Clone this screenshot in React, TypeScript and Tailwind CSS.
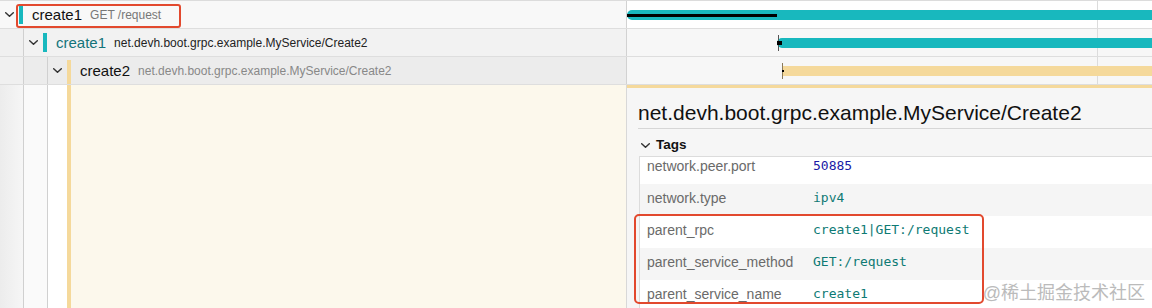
import React from 'react';

const sans = "font-['Liberation_Sans','Noto_Sans_CJK_SC',sans-serif]";
const mono = "font-['DejaVu_Sans_Mono','Liberation_Mono',monospace]";

function Chevron({ className = '' }: { className?: string }) {
  return (
    <svg width="9" height="5" viewBox="0 0 9 5" className={className}>
      <path d="M0.7 0.7l3.8 3.6 3.8-3.6" fill="none" stroke="#333" strokeWidth="1.4" strokeLinecap="round" />
    </svg>
  );
}

type Span = {
  level: number;
  bar: string;
  name: string;
  nameColor: string;
  service: string;
  serviceColor: string;
  leftBg: string;
  rightBg: string;
  tall?: boolean;
};

const spans: Span[] = [
  { level: 0, bar: 'bg-[#18b8be]', name: 'create1', nameColor: 'text-[#111]', service: 'GET /request', serviceColor: 'text-[#777]', leftBg: 'bg-[#f8f8f8]', rightBg: 'bg-white' },
  { level: 1, bar: 'bg-[#18b8be]', name: 'create1', nameColor: 'text-[#14747a]', service: 'net.devh.boot.grpc.example.MyService/Create2', serviceColor: 'text-[#222]', leftBg: 'bg-[#f2f2f2]', rightBg: 'bg-[#f7f7f7]' },
  { level: 2, bar: 'bg-[#f5d99b]', name: 'create2', nameColor: 'text-[#111]', service: 'net.devh.boot.grpc.example.MyService/Create2', serviceColor: 'text-[#888]', leftBg: 'bg-[#ececec]', rightBg: 'bg-[#f7f7f7]', tall: true },
];

const tags = [
  { key: 'network.peer.port', value: '50885', color: 'text-[#1a1aa6]' },
  { key: 'network.type', value: 'ipv4', color: 'text-[#0e7a74]' },
  { key: 'parent_rpc', value: 'create1|GET:/request', color: 'text-[#0e7a74]' },
  { key: 'parent_service_method', value: 'GET:/request', color: 'text-[#0e7a74]' },
  { key: 'parent_service_name', value: 'create1', color: 'text-[#0e7a74]' },
];

function SpanRow({ s, index }: { s: Span; index: number }) {
  return (
    <div className="flex h-[28px] border-b border-[#dedede]">
      <div className={`relative flex h-full w-[627px] shrink-0 items-center border-r border-[#d2d2d2] ${s.leftBg}`}>
        {Array.from({ length: s.level }).map((_, i) => (
          <div key={i} className={`h-full w-[24px] shrink-0 border-r border-[#d0d0d0] ${i === 0 ? 'bg-[#f0f0f0]' : ''}`} />
        ))}
        <div className="flex w-[19px] shrink-0 justify-center">
          <Chevron />
        </div>
        {s.tall ? (
          <div className={`h-[24px] w-[4px] shrink-0 self-end ${s.bar}`} />
        ) : (
          <div className={`h-[19px] w-[4px] shrink-0 ${s.bar}`} />
        )}
        <span className={`ml-[9px] text-[15px] leading-none ${s.nameColor}`}>{s.name}</span>
        <span className={`ml-[8px] text-[12px] leading-none ${s.serviceColor}`}>{s.service}</span>
        {index === 0 && (
          <div className="absolute left-[16px] top-[3px] h-[24px] w-[165px] rounded-[3px] border-2 border-[#e2492e]" />
        )}
      </div>
      <div className={`relative h-full flex-1 overflow-hidden ${s.rightBg}`}>
        <div className="absolute left-[470px] top-0 h-full w-px bg-[#dcdcdc]" />
        {index === 0 && (
          <>
            <div className="absolute left-0 right-0 top-[9px] h-[10px] rounded-l-full bg-[#18b8be]" />
            <div className="absolute left-0 top-[13px] h-[3px] w-[150px] bg-black" />
          </>
        )}
        {index === 1 && (
          <>
            <div className="absolute left-[150px] right-0 top-[9px] h-[10px] rounded-l-full bg-[#18b8be]" />
            <div className="absolute left-[151px] top-[6px] h-[16px] w-px bg-[#555]" />
            <div className="absolute left-[150px] top-[12px] h-[4px] w-[5px] bg-black" />
          </>
        )}
        {index === 2 && (
          <>
            <div className="absolute left-[156px] right-0 top-[9px] h-[10px] bg-[#f5d99b]" />
            <div className="absolute left-[155px] top-[6px] h-[16px] w-px bg-[#8a7a5a]" />
            <div className="absolute left-[155px] top-[13px] h-[2px] w-[2px] bg-black" />
          </>
        )}
      </div>
    </div>
  );
}

export default function App() {
  return (
    <div className={`relative h-[308px] w-[1152px] overflow-hidden bg-white ${sans}`}>
      <div className="border-t border-[#dcdcdc]">
        {spans.map((s, i) => (
          <SpanRow key={i} s={s} index={i} />
        ))}
      </div>
      <div className="flex h-[223px]">
        <div className="flex h-full w-[627px] shrink-0 border-r border-[#d8d8d8]">
          <div className="h-full w-[24px] shrink-0 border-r border-[#d0d0d0] bg-gradient-to-r from-[#ececec] to-[#f6f6f6]" />
          <div className="h-full w-[24px] shrink-0 border-r border-[#d0d0d0] bg-[#fafafa]" />
          <div className="h-full w-[19px] shrink-0 bg-white" />
          <div className="h-full w-[4px] shrink-0 bg-[#f5d99b]" />
          <div className="h-full flex-1 bg-[#fcf8ec]" />
        </div>
        <div className="flex h-full flex-1 flex-col overflow-hidden">
          <div className="h-[3px] shrink-0 bg-[#f5d99b]" />
          <div className="flex-1 bg-[#f6f6f6] pl-[11px]">
            <div className="mt-[13px] border-b border-[#d6d6d6] pb-[3px] text-[21px] leading-[24px] text-[#111]">
              net.devh.boot.grpc.example.MyService/Create2
            </div>
            <div className="mt-[7px] flex h-[18px] items-center">
              <Chevron className="ml-[3px]" />
              <span className="ml-[6px] text-[13.5px] font-bold text-[#111]">Tags</span>
            </div>
            <div className="relative ml-[1px] mt-[2px] h-[160px] border-l border-t border-[#dcdcdc]">
              <div className="h-full overflow-hidden">
                <div className="-mt-[5px]">
                  {tags.map((t, i) => (
                    <div key={t.key} className={`flex h-[32px] items-start pt-[6px] leading-[16px] ${i % 2 === 0 ? 'bg-white' : 'bg-[#f5f5f5]'}`}>
                      <span className="w-[173px] shrink-0 pl-[7px] text-[14px] text-[#6a6a6a]">{t.key}</span>
                      <span className={`${mono} text-[13px] ${t.color}`}>{t.value}</span>
                    </div>
                  ))}
                </div>
              </div>
              <div className="absolute left-[-6px] top-[57px] h-[90px] w-[350px] rounded-[5px] border-2 border-[#e2492e]" />
            </div>
          </div>
        </div>
      </div>
      <div className="absolute bottom-[4px] right-[7px] text-[18px] leading-[22px] text-[#bbb]">@稀土掘金技术社区</div>
    </div>
  );
}
